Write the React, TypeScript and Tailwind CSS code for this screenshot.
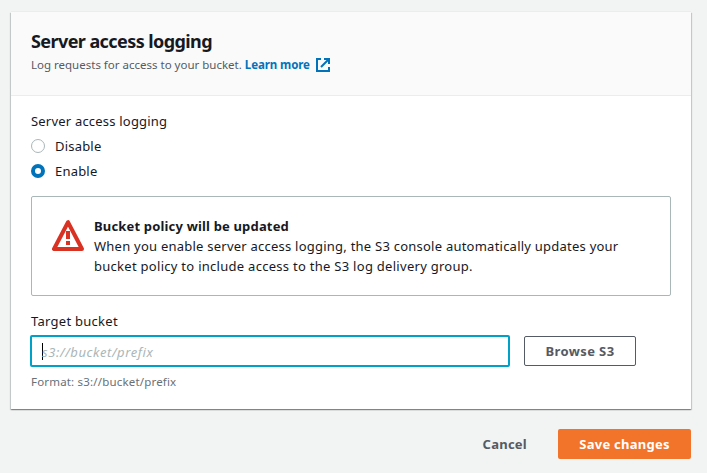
import React from "react";

function ExternalIcon() {
  return (
    <svg className="ml-[6px] h-[14px] w-[14px] shrink-0" viewBox="0 0 14 14" fill="none" stroke="#0073bb" strokeWidth="2">
      <path d="M5 1H1v12h12V9" />
      <path d="M8 1h5v5M13 1L5 9" />
    </svg>
  );
}

function WarningIcon() {
  return (
    <svg className="mt-[3px] h-8 w-8 shrink-0" viewBox="0 0 32 32" fill="none" stroke="#d93223" strokeWidth="4">
      <path d="M16 3.2L2 30h28Z" strokeLinejoin="round" />
      <path d="M16 12v8M16 22v4" />
    </svg>
  );
}

function Radio({ label, checked }: { label: string; checked?: boolean }) {
  return (
    <label className="flex h-[25px] items-center">
      <span
        className={
          checked
            ? "h-[14px] w-[14px] rounded-full border-[4px] border-[#0073bb] bg-white"
            : "h-[14px] w-[14px] rounded-full border border-[#aab7b8] bg-white"
        }
      />
      <span className="ml-[10px]">{label}</span>
    </label>
  );
}

export default function App() {
  return (
    <div className="h-[473px] w-[707px] overflow-hidden bg-[#f2f3f3] pl-[11px] pt-3 font-['Noto_Sans','Open_Sans',sans-serif] text-[13px] leading-5 tracking-[0.2px] text-[#16191f]">
      <section className="flex h-[397px] w-[680px] flex-col bg-white shadow-[0_1px_1px_0_rgba(0,28,36,0.3),1px_1px_1px_0_rgba(0,28,36,0.15),-1px_1px_1px_0_rgba(0,28,36,0.15),0_-1px_0_0_#eaeded]">
        <header className="h-[84px] border-b border-[#eaeded] bg-[#fafafa] px-5 pt-[17px]">
          <h1 className="h-[25px] whitespace-nowrap text-[18px] font-bold leading-6 tracking-[-0.58px]">Server access logging</h1>
          <p className="flex h-[22px] items-center whitespace-nowrap text-[11.5px] tracking-normal text-[#545b64]">
            <span>Log requests for access to your bucket.</span>
            <a className="ml-[3px] font-bold tracking-[-0.1px] text-[#0073bb]">Learn more</a>
            <ExternalIcon />
          </p>
        </header>
        <div className="flex flex-col px-5 pt-[15px]">
          <div className="h-[22px]">Server access logging</div>
          <Radio label="Disable" />
          <Radio label="Enable" checked />
          <div className="mt-[13px] flex h-[100px] rounded-[2px] border border-[#aab7b8] pl-5 pt-[19px]">
            <WarningIcon />
            <div className="ml-[10px] whitespace-nowrap">
              <div className="font-bold tracking-[0.17px]">Bucket policy will be updated</div>
              <div className="tracking-[0.235px]">When you enable server access logging, the S3 console automatically updates your</div>
              <div className="tracking-[0.28px]">bucket policy to include access to the S3 log delivery group.</div>
            </div>
          </div>
          <div className="mt-[15px] tracking-[0.27px]">Target bucket</div>
          <div className="-ml-px mt-[4px] flex items-center">
            <div className="flex h-8 w-[480px] items-center rounded-[2px] border-2 border-[#00a1c9] bg-white pl-[10px]">
              <span className="h-[17px] w-px bg-black" />
              <span className="-ml-px pt-[2px] italic tracking-[0.6px] text-[#aab7b8]">s3://bucket/prefix</span>
            </div>
            <button className="ml-[14px] h-[30px] w-[112px] rounded-[2px] border border-[#545b64] font-bold tracking-[0.4px] text-[#545b64]">Browse S3</button>
          </div>
          <div className="mt-[5px] text-[11.5px] tracking-[0.18px] text-[#687078]">Format: s3://bucket/prefix</div>
        </div>
      </section>
      <footer className="mt-5 flex w-[680px] items-center justify-end">
        <button className="mr-[31px] font-bold tracking-[0.25px] text-[#545b64]">Cancel</button>
        <button className="h-[30px] w-[133px] rounded-[2px] bg-[#f2732a] font-bold tracking-[0.25px] text-white">Save changes</button>
      </footer>
    </div>
  );
}
